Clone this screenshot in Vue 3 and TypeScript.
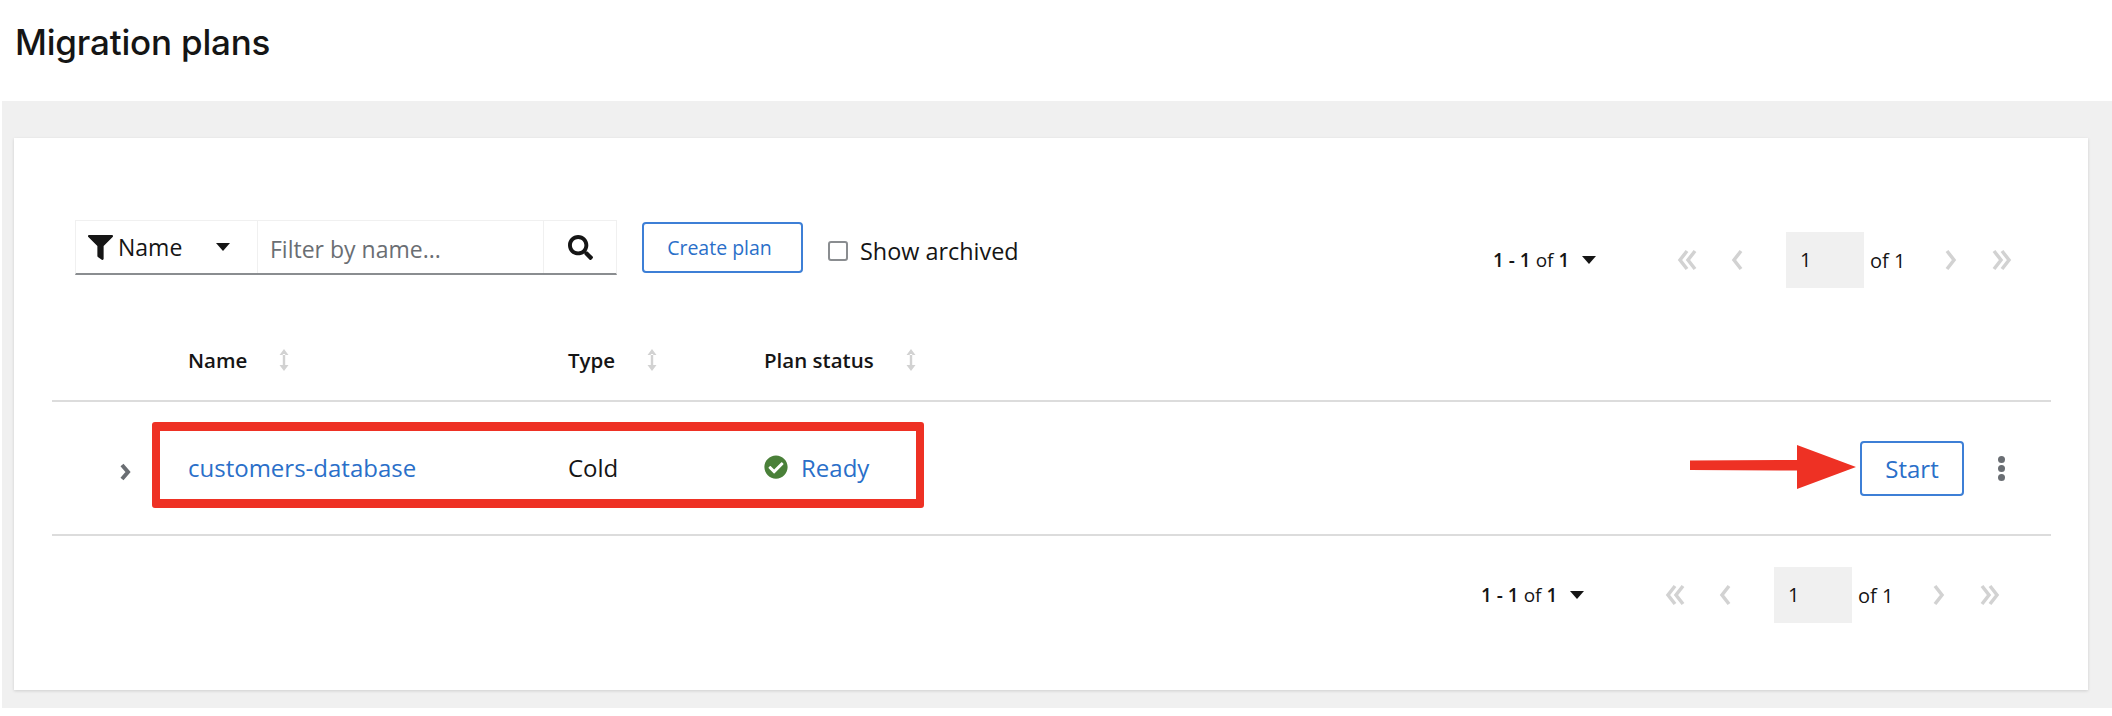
<template>
  <div class="page">
    <h1 class="title">Migration plans</h1>

    <section class="band">
      <div class="card">
        <div class="toolbar">
          <div class="filter">
            <button class="filter-select">
              <svg class="filter-icon" viewBox="0 0 512 512"><path :d="icons.filter" /></svg>
              <span>Name</span>
              <i class="caret filter-caret"></i>
            </button>
            <div class="filter-input">Filter by name...</div>
            <button class="filter-search">
              <svg class="search-icon" viewBox="0 0 512 512"><path :d="icons.search" /></svg>
            </button>
          </div>
          <button class="btn create">Create plan</button>
          <label class="archived">
            <span class="checkbox"></span>
            Show archived
          </label>
          <div class="pager pager-top">
            <span class="pager-label"><b>1 - 1</b> of <b>1</b></span>
            <i class="caret pager-caret"></i>
            <svg class="nav nav-first" viewBox="0 0 21 24"><path d="M10 3 3 12l7 9M18 3l-7 9 7 9" /></svg>
            <svg class="nav nav-prev" viewBox="0 0 12 24"><path d="M10 3 3 12l7 9" /></svg>
            <span class="page-input">1</span>
            <span class="pager-of">of 1</span>
            <svg class="nav nav-next" viewBox="0 0 12 24"><path d="m2 3 7 9-7 9" /></svg>
            <svg class="nav nav-last" viewBox="0 0 21 24"><path d="m3 3 7 9-7 9M11 3l7 9-7 9" /></svg>
          </div>
        </div>

        <div class="table">
          <div class="thead">
            <span></span>
            <span v-for="col in columns" :key="col" class="th">
              {{ col }}
              <svg class="sort" viewBox="0 0 12 24"><path d="M6 1 1.500 7h9zM6 23l-4.500-6h9zM4.800 6h2.400v12H4.800z" /></svg>
            </span>
          </div>
          <div class="row">
            <span class="expand">
              <svg viewBox="0 0 12 20"><path d="m3 3 6 7-6 7" /></svg>
            </span>
            <a class="link name-link">customers-database</a>
            <span class="cell">Cold</span>
            <span class="status">
              <svg class="ok" viewBox="0 0 512 512"><path :d="icons.check" /></svg>
              <a class="link">Ready</a>
            </span>
            <button class="btn start">Start</button>
            <span class="kebab"><i></i><i></i><i></i></span>

            <!-- annotation drawn over the screenshot -->
            <div class="callout"></div>
            <svg class="arrow" viewBox="0 0 166 44"><path d="M0 15.500 107 15v-15l59 22-59 22V25.500L0 25z" /></svg>
          </div>
        </div>

        <div class="pager pager-bottom">
          <span class="pager-label"><b>1 - 1</b> of <b>1</b></span>
          <i class="caret pager-caret"></i>
          <svg class="nav nav-first" viewBox="0 0 21 24"><path d="M10 3 3 12l7 9M18 3l-7 9 7 9" /></svg>
          <svg class="nav nav-prev" viewBox="0 0 12 24"><path d="M10 3 3 12l7 9" /></svg>
          <span class="page-input">1</span>
          <span class="pager-of">of 1</span>
          <svg class="nav nav-next" viewBox="0 0 12 24"><path d="m2 3 7 9-7 9" /></svg>
          <svg class="nav nav-last" viewBox="0 0 21 24"><path d="m3 3 7 9-7 9M11 3l7 9-7 9" /></svg>
        </div>
      </div>
    </section>
  </div>
</template>

<script setup lang="ts">
const columns: string[] = ['Name', 'Type', 'Plan status']

const icons = {
  filter:
    'M487.976 0H24.028C2.71 0-8.047 25.866 7.058 40.971L192 225.941V432c0 7.831 3.821 15.17 10.237 19.662l80 55.98C298.02 518.69 320 507.493 320 487.98V225.941l184.947-184.97C520.021 25.896 509.338 0 487.976 0z',
  search:
    'M505 442.7L405.3 343c-4.5-4.5-10.600-7-17-7H372c27.600-35.300 44-79.700 44-128C416 93.100 322.900 0 208 0S0 93.100 0 208s93.100 208 208 208c48.300 0 92.700-16.400 128-44v16.300c0 6.400 2.500 12.500 7 17l99.700 99.700c9.400 9.400 24.600 9.400 33.900 0l28.300-28.300c9.400-9.400 9.400-24.600.1-34zM208 336c-70.700 0-128-57.200-128-128 0-70.700 57.200-128 128-128 70.700 0 128 57.200 128 128 0 70.700-57.200 128-128 128z',
  check:
    'M504 256c0 136.967-111.033 248-248 248S8 392.967 8 256 119.033 8 256 8s248 111.033 248 248zM227.314 387.314l184-184c6.248-6.248 6.248-16.379 0-22.627l-22.627-22.627c-6.248-6.249-16.379-6.249-22.628 0L216 308.118l-70.059-70.059c-6.248-6.248-16.379-6.248-22.628 0l-22.627 22.627c-6.248 6.248-6.248 16.379 0 22.627l104 104c6.249 6.249 16.379 6.249 22.628.001z'
}
</script>

<style scoped>
.page {
  width: 2112px;
  height: 716px;
  background: #fff;
  color: #151515;
  font-family: "Open Sans", "Liberation Sans", sans-serif;
  font-size: 24px;
  overflow: hidden;
}

.title {
  margin: 0;
  height: 101px;
  padding: 21px 0 0 15px;
  box-sizing: border-box;
  font-family: Inter, sans-serif;
  font-size: 35px;
  line-height: 42px;
  font-weight: 500;
  letter-spacing: -0.2px;
}

.band {
  margin-left: 2px;
  height: 607px;
  padding: 37px 24px 18px 12px;
  box-sizing: border-box;
  background: #f0f0f0;
}

.card {
  height: 552px;
  background: #fff;
  box-shadow: 0 1px 3px rgba(0, 0, 0, 0.14);
  padding-top: 82px;
  box-sizing: border-box;
}

button {
  font: inherit;
  background: none;
  border: 0;
  padding: 0;
}

.toolbar {
  display: flex;
  align-items: flex-start;
  padding-left: 61px;
  height: 68px;
}

.filter {
  display: flex;
  width: 542px;
  height: 55px;
  box-sizing: border-box;
  border: 1px solid #f0f0f0;
  border-bottom: 2px solid #8a8d90;
  font-size: 23px;
}

.filter-select {
  display: flex;
  align-items: center;
  width: 182px;
  padding-left: 12px;
  box-sizing: border-box;
  border-right: 1px solid #f0f0f0;
  color: #151515;
}

.filter-icon {
  width: 25px;
  height: 25px;
  margin-right: 5px;
  fill: #151515;
}

.filter-caret {
  margin-left: 34px;
}

.filter-input {
  width: 286px;
  padding-left: 12px;
  box-sizing: border-box;
  line-height: 56px;
  color: #6a6e73;
  border-right: 1px solid #f0f0f0;
}

.filter-search {
  display: flex;
  align-items: center;
  justify-content: center;
  flex: 1;
}

.search-icon {
  width: 25px;
  height: 25px;
  fill: #151515;
}

.btn {
  box-sizing: border-box;
  border: 2px solid #3d7fd6;
  border-radius: 4px;
  color: #2a6fc9;
  background: #fff;
}

.create {
  width: 161px;
  height: 51px;
  margin: 2px 0 0 25px;
  padding-right: 6px;
  font-size: 19.500px;
}

.archived {
  display: flex;
  align-items: center;
  gap: 12px;
  height: 20px;
  margin: 21px 0 0 25px;
  font-size: 23.400px;
}

.checkbox {
  width: 20px;
  height: 20px;
  box-sizing: border-box;
  border: 2px solid #8a8d90;
  border-radius: 3px;
}

.pager {
  display: flex;
  align-items: center;
  height: 56px;
}

.pager-top {
  margin: 12px 0 0 auto;
  padding-right: 76px;
}

.pager-bottom {
  justify-content: flex-end;
  margin-top: 31px;
  padding-right: 88px;
}

.pager-label {
  width: 89px;
  white-space: nowrap;
  font-size: 19px;
}

.pager-label b {
  font-weight: 600;
}

.pager-caret {
  margin-right: 81px;
}

.caret {
  width: 0;
  height: 0;
  border-left: 7px solid transparent;
  border-right: 7px solid transparent;
  border-top: 8px solid #151515;
}

.nav {
  height: 24px;
  fill: none;
  stroke: #d2d2d2;
  stroke-width: 3.500;
}

.nav-first,
.nav-last {
  width: 21px;
}

.nav-prev,
.nav-next {
  width: 12px;
}

.nav-first {
  margin-right: 33px;
}

.nav-prev {
  margin-right: 43px;
}

.page-input {
  width: 78px;
  height: 56px;
  padding-left: 14px;
  box-sizing: border-box;
  line-height: 56px;
  background: #f0f0f0;
  font-size: 20px;
}

.pager-of {
  width: 81px;
  padding-left: 6px;
  box-sizing: border-box;
  font-size: 20px;
}

.nav-next {
  margin-right: 34px;
}

.table {
  margin: 0 37px 0 38px;
}

.thead,
.row {
  display: grid;
  grid-template-columns: 136px 380px 196px 1fr;
  align-items: center;
  border-bottom: 2px solid #dcdcdc;
}

.thead {
  height: 114px;
  padding-bottom: 25px;
  box-sizing: border-box;
  align-items: end;
}

.th {
  display: flex;
  align-items: center;
  gap: 30px;
  font-size: 20.500px;
  font-weight: 600;
  height: 24px;
  margin-bottom: 3px;
}

.sort {
  width: 14px;
  height: 24px;
  fill: #d2d2d2;
}

.row {
  position: relative;
  grid-template-columns: 136px 380px 196px 1fr 104px 87px;
  height: 132px;
}

.expand {
  justify-self: end;
  margin: 8px 57px 0 0;
  display: flex;
}

.expand svg {
  width: 12px;
  height: 20px;
  fill: none;
  stroke: #6a6e73;
  stroke-width: 4;
}

.link {
  color: #2a6fc9;
}

.name-link,
.cell,
.status {
  margin-top: -2px;
}

.status {
  display: flex;
  align-items: center;
  gap: 13px;
}

.ok {
  width: 24px;
  height: 24px;
  fill: #4a8039;
}

.start {
  grid-column: 5;
  width: 104px;
  height: 55px;
}

.kebab {
  display: flex;
  flex-direction: column;
  gap: 2px;
  margin-left: 34px;
}

.kebab i {
  width: 7px;
  height: 7px;
  border-radius: 50%;
  background: #6a6e73;
}

.callout {
  position: absolute;
  left: 100px;
  top: 20px;
  width: 772px;
  height: 86px;
  box-sizing: border-box;
  border: 9px solid #ee3124;
  border-width: 9px 8px;
  border-radius: 3px;
}

.arrow {
  position: absolute;
  left: 1638px;
  top: 43px;
  width: 166px;
  height: 44px;
  fill: #ee3124;
}
</style>

<style>
body {
  background: #fff;
}
</style>
